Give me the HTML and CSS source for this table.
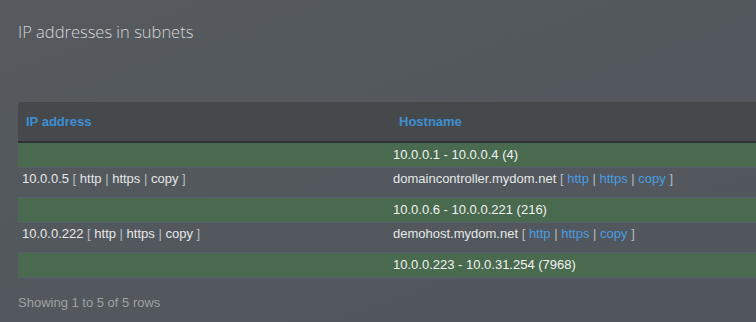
FILE: index.html
```html
<!DOCTYPE html>
<html>
<head>
<meta charset="utf-8">
<link rel="stylesheet" href="styles.css">
</head>
<body>
<div class="page">
  <h1 class="title">IP addresses in subnets</h1>
  <div class="table-wrap">
    <table class="grid">
      <thead>
        <tr><th class="col-ip">IP address</th><th class="col-host">Hostname</th></tr>
      </thead>
      <tbody>
        <tr class="free"><td></td><td>10.0.0.1 - 10.0.0.4 (4)</td></tr>
        <tr class="used"><td>10.0.0.5 <span class="br">[</span> http <span class="sep">|</span> https <span class="sep">|</span> copy <span class="br">]</span></td><td>domaincontroller.mydom.net <span class="br">[</span> <a>http</a> <span class="sep">|</span> <a>https</a> <span class="sep">|</span> <a>copy</a> <span class="br">]</span></td></tr>
        <tr class="free"><td></td><td>10.0.0.6 - 10.0.0.221 (216)</td></tr>
        <tr class="used"><td>10.0.0.222 <span class="br">[</span> http <span class="sep">|</span> https <span class="sep">|</span> copy <span class="br">]</span></td><td>demohost.mydom.net <span class="br">[</span> <a>http</a> <span class="sep">|</span> <a>https</a> <span class="sep">|</span> <a>copy</a> <span class="br">]</span></td></tr>
        <tr class="free"><td></td><td>10.0.0.223 - 10.0.31.254 (7968)</td></tr>
      </tbody>
    </table>
  </div>
  <div class="footer">Showing 1 to 5 of 5 rows</div>
</div>
</body>
</html>
```
FILE: styles.css
```css
html, body {
  margin: 0;
  padding: 0;
  width: 756px;
  height: 322px;
  overflow: hidden;
}
body {
  background: linear-gradient(160deg, #565a5e 0%, #52585d 50%, #51575c 100%);
  font-family: "Liberation Sans", Arial, sans-serif;
  color: #e6e7e8;
}
.page {
  padding: 0 0 0 18px;
}
.title {
  margin: 0;
  padding-top: 21px;
  font-family: "Open Sans", sans-serif;
  font-weight: 300;
  font-size: 16.5px;
  line-height: 22px;
  color: #d3d6d8;
}
.table-wrap {
  margin-top: 59px;
  width: 760px;
}
.grid {
  width: 100%;
  border-collapse: collapse;
  font-size: 13px;
  line-height: 16px;
}
.grid thead th {
  background: #45494c;
  height: 39px;
  padding: 0 8px 0 10px;
  text-align: left;
  font-weight: bold;
  color: #3f8ed3;
  border-bottom: 2px solid #2f3234;
  vertical-align: middle;
}
.grid thead th.col-ip {
  width: 355px;
  padding-left: 8px;
  border-top-left-radius: 4px;
}
.grid td {
  padding: 0 4px;
}
.grid tr.free td {
  background: #4a6a4f;
  height: 24px;
  vertical-align: middle;
  color: #f0f2f0;
}
.grid tr.used td {
  height: 26px;
  padding-top: 3px;
  vertical-align: top;
}
.grid tbody tr {
  border-bottom: 1px solid #58616a;
}
.br, .sep {
  color: #b8bbbe;
}
.grid a {
  color: #4a9de2;
  text-decoration: none;
}
.footer {
  margin-top: 17px;
  font-size: 13px;
  line-height: 16px;
  color: #9ea2a5;
}
```
